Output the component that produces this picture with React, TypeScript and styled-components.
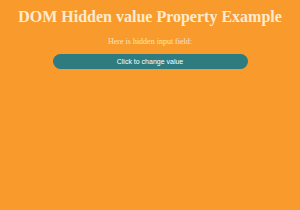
import React from "react"
import styled, { createGlobalStyle } from "styled-components"

const Global = createGlobalStyle`
html, body {
  margin: 0;
  padding: 0;
  background: #f89b2c;
}
`

const Page = styled.div`
width: 300px;
height: 210px;
background: #f89b2c;
display: flex;
flex-direction: column;
align-items: center;
text-align: center;
font-family: "Liberation Serif", serif;
color: #fdebd0;`

const Title = styled.h1`
margin: 7px 0 0;
font-size: 16px;
line-height: 19px;
font-weight: bold;
white-space: nowrap;`

const Label = styled.p`
margin: 11px 0 0;
font-size: 8px;
line-height: 10px;
color: #fbe2c4;`

const Button = styled.button`
margin-top: 7px;
width: 195px;
height: 15px;
border: none;
border-radius: 8px;
background: #2e7b80;
color: #ffffff;
font-family: "Liberation Sans", sans-serif;
font-size: 7px;
padding: 0;`

const App = () => {
  return <Page>
    <Global />
    <Title>DOM Hidden value Property Example</Title>
    <Label>Here is hidden input field:</Label>
    <input type="hidden" value="hidden" />
    <Button>Click to change value</Button>
  </Page>
}

export default App
